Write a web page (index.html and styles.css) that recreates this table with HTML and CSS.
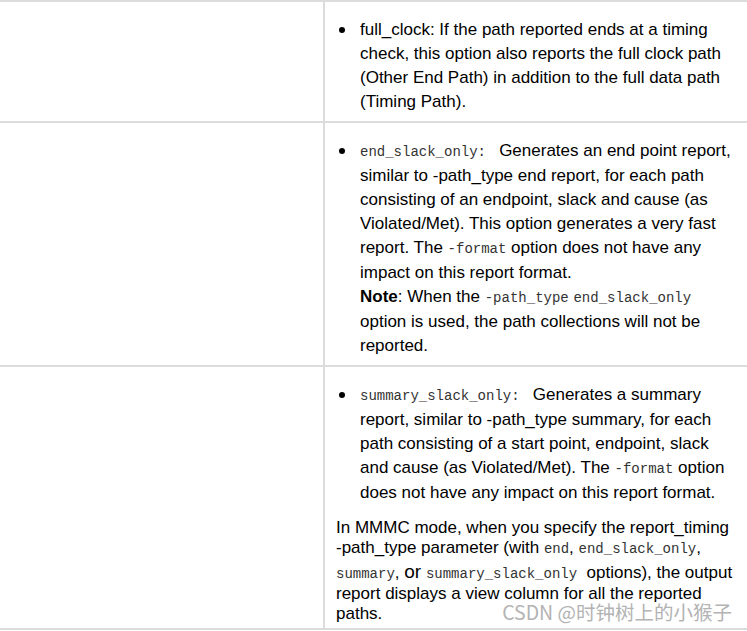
FILE: index.html
```html
<!DOCTYPE html>
<html lang="en">
<head>
<meta charset="utf-8">
<title>report_timing -path_type options</title>
<link rel="stylesheet" href="styles.css">
</head>
<body>
<div class="page">
  <div class="opt-table">
    <div class="opt-row">
      <div class="opt-label"></div>
      <div class="opt-desc">
        <ul class="opt-list">
          <li>full_clock: If the path reported ends at a timing check, this option also reports the full clock path (Other End Path) in addition to the full data path (Timing Path).</li>
        </ul>
      </div>
    </div>
    <div class="opt-row">
      <div class="opt-label"></div>
      <div class="opt-desc">
        <ul class="opt-list">
          <li><code>end_slack_only:&nbsp;</code> Generates an end point report, similar to <span class="nw">-path_type</span> end report, for each path consisting of an endpoint, slack and cause (as Violated/Met). This option generates a very fast report. The <code>-format</code> option does not have any impact on this report format.<br><strong>Note</strong>: When the <code>-path_type</code> <code>end_slack_only</code> option is used, the path collections will not be reported.</li>
        </ul>
      </div>
    </div>
    <div class="opt-row opt-row-last">
      <div class="opt-label"></div>
      <div class="opt-desc">
        <ul class="opt-list">
          <li><code>summary_slack_only:&nbsp;</code> Generates a summary report, similar to <span class="nw">-path_type</span> summary, for each path consisting of a start point, endpoint, slack and cause (as Violated/Met). The <code>-format</code> option does not have any impact on this report format.</li>
        </ul>
        <p class="mmmc">In MMMC mode, when you specify the report_timing <span class="nw">-path_type</span> parameter (with <code>end</code>, <code>end_slack_only</code>, <code>summary</code>, <span class="or">or</span> <code>summary_slack_only</code>&nbsp; options), the output report displays a view column for all the reported paths.</p>
      </div>
      <div class="watermark">CSDN @时钟树上的小猴子</div>
    </div>
  </div>
</div>
</body>
</html>
```
FILE: styles.css
```css
html, body {
  margin: 0;
  padding: 0;
  background: #ffffff;
}

body {
  font-family: "Liberation Sans", Arial, sans-serif;
  font-size: 17px;
  color: #000000;
}

.page {
  width: 747px;
}

.opt-table {
  border-top: 2px solid #dcdcdc;
}

.opt-row {
  display: grid;
  grid-template-columns: 325px 1fr;
  border-bottom: 2px solid #dcdcdc;
}

.opt-row-last {
  position: relative;
}

.opt-row-last .opt-desc {
  padding-bottom: 4px;
}

.opt-label {
  border-right: 2px solid #dcdcdc;
}

.opt-desc {
  padding: 16px 8px 7px 11px;
}

.opt-list {
  list-style: none;
  margin: 0;
  padding: 0 0 0 24px;
  line-height: 24px;
}

.opt-list li {
  position: relative;
}

.opt-list li::before {
  content: "";
  position: absolute;
  left: -21px;
  top: 9px;
  width: 6px;
  height: 6px;
  border-radius: 50%;
  background: #000000;
}

code {
  font-family: "Liberation Mono", "Courier New", monospace;
  font-size: 14px;
  color: #333333;
}

.nw {
  white-space: nowrap;
}

strong {
  font-weight: bold;
}

.mmmc {
  margin: 13px 0 0 0;
  line-height: 20px;
}

.or {
  font-size: 19px;
  line-height: 25px;
}

.watermark {
  position: absolute;
  right: 15px;
  bottom: 6px;
  font-family: "Noto Sans CJK SC", "Liberation Sans", sans-serif;
  font-size: 19.5px;
  line-height: 20px;
  color: #b3b3b3;
  white-space: nowrap;
}
```
